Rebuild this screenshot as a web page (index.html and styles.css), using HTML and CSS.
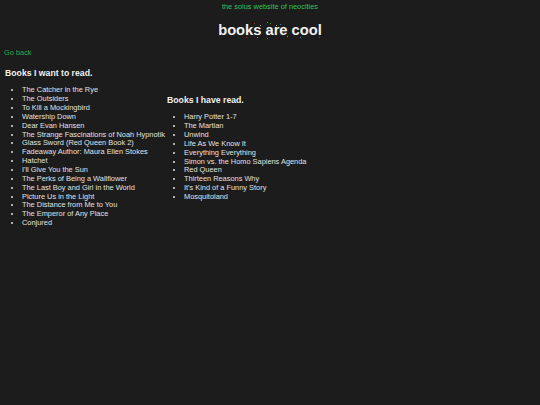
FILE: index.html
```html
<!DOCTYPE html>
<html>
<head>
<meta charset="utf-8">
<link rel="stylesheet" href="styles.css">
</head>
<body>
<p class="site">the solus website of neocities</p>
<div class="title-wrap">
  <h1 class="title">books are cool</h1>
  <span class="dot d1"></span><span class="dot d2"></span><span class="dot d3"></span><span class="dot d4"></span><span class="dot d5"></span><span class="dot d6"></span><span class="dot d7"></span><span class="dot d8"></span><span class="dot d9"></span><span class="dot d10"></span><span class="dot d11"></span><span class="dot d12"></span>
</div>
<a class="back" href="#">Go back</a>
<div class="columns">
  <div class="col col-want">
    <h3 class="heading">Books I want to read.</h3>
    <ul class="list">
      <li>The Catcher in the Rye</li>
      <li>The Outsiders</li>
      <li>To Kill a Mockingbird</li>
      <li>Watership Down</li>
      <li>Dear Evan Hansen</li>
      <li>The Strange Fascinations of Noah Hypnotik</li>
      <li>Glass Sword (Red Queen Book 2)</li>
      <li>Fadeaway Author: Maura Ellen Stokes</li>
      <li>Hatchet</li>
      <li>I'll Give You the Sun</li>
      <li>The Perks of Being a Wallflower</li>
      <li>The Last Boy and Girl in the World</li>
      <li>Picture Us in the Light</li>
      <li>The Distance from Me to You</li>
      <li>The Emperor of Any Place</li>
      <li>Conjured</li>
    </ul>
  </div>
  <div class="col col-read">
    <h3 class="heading">Books I have read.</h3>
    <ul class="list">
      <li>Harry Potter 1-7</li>
      <li>The Martian</li>
      <li>Unwind</li>
      <li>Life As We Know It</li>
      <li>Everything Everything</li>
      <li>Simon vs. the Homo Sapiens Agenda</li>
      <li>Red Queen</li>
      <li>Thirteen Reasons Why</li>
      <li>It's Kind of a Funny Story</li>
      <li>Mosquitoland</li>
    </ul>
  </div>
</div>
</body>
</html>
```

FILE: styles.css
```css
html, body {
  margin: 0;
  padding: 0;
  background: #1c1c1c;
}
body {
  font-family: "Liberation Sans", Arial, sans-serif;
  color: #e2e2e2;
  padding: 0 4px;
  min-height: 405px;
  box-sizing: border-box;
}
.site {
  margin: 3px 0 0;
  text-align: center;
  color: #2ec45a;
  font-size: 7.4px;
  line-height: 8.5px;
}
.title-wrap {
  position: relative;
  margin-top: 10px;
}
.title {
  margin: 0;
  text-align: center;
  font-size: 14.7px;
  line-height: 17px;
  font-weight: bold;
  color: #f2f2f2;
}
.dot {
  position: absolute;
  width: 1px;
  height: 1px;
  opacity: 0.8;
}
.d1 { left: 250px; top: 1px; background: #c33; }
.d2 { left: 256px; top: 3px; background: #ccc; }
.d3 { left: 263px; top: 0px; background: #3c3; }
.d4 { left: 266px; top: 1px; background: #3c3; }
.d5 { left: 272px; top: 3px; background: #cc3; }
.d6 { left: 276px; top: 2px; background: #39f; }
.d7 { left: 242px; top: 15px; background: #c33; }
.d8 { left: 253px; top: 15px; background: #aaa; }
.d9 { left: 263px; top: 16px; background: #3c3; }
.d10 { left: 283px; top: 14px; background: #aaa; }
.d11 { left: 296px; top: 15px; background: #39f; }
.d12 { left: 315px; top: 15px; background: #c33; }
.back {
  display: block;
  margin-top: 10.25px;
  color: #22b14c;
  text-decoration: none;
  font-size: 7.4px;
  line-height: 8.5px;
}
.columns {
  display: flex;
  align-items: flex-start;
  margin-top: 10.75px;
}
.col-want {
  width: 162px;
  padding-left: 1px;
}
.col-read {
  margin-top: 27px;
}
.heading {
  margin: 0;
  font-size: 8.7px;
  line-height: 10px;
  font-weight: bold;
  color: #f0f0f0;
}
.list {
  margin: 8.4px 0 0;
  padding-left: 17px;
  font-size: 7.4px;
  line-height: 8.85px;
  color: #e2e2e2;
}
```
